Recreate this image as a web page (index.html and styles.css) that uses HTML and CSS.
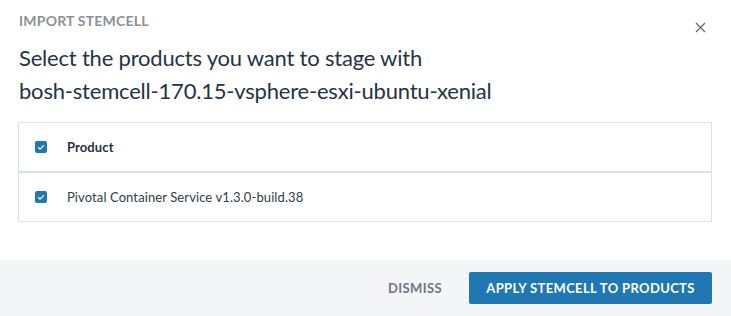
FILE: index.html
```html
<!DOCTYPE html>
<html>
<head>
<meta charset="utf-8">
<link rel="stylesheet" href="styles.css">
</head>
<body>
<div class="modal">
  <div class="body">
    <div class="top">
      <div class="eyebrow">IMPORT STEMCELL</div>
      <button class="close" aria-label="Close">
        <svg width="11" height="11" viewBox="0 0 11 11"><path d="M1 1L10 10M10 1L1 10" stroke="#5f6b76" stroke-width="1.3" fill="none"/></svg>
      </button>
    </div>
    <h1 class="title">Select the products you want to stage with<br>bosh-stemcell-170.15-vsphere-esxi-ubuntu-xenial</h1>
    <div class="table">
      <div class="row head">
        <span class="cb"><svg width="12" height="12" viewBox="0 0 12 12"><path d="M3 6.2L5 8.2L9 4.2" stroke="#fff" stroke-width="1.2" fill="none"/></svg></span>
        <span class="label">Product</span>
      </div>
      <div class="row">
        <span class="cb"><svg width="12" height="12" viewBox="0 0 12 12"><path d="M3 6.2L5 8.2L9 4.2" stroke="#fff" stroke-width="1.2" fill="none"/></svg></span>
        <span class="label">Pivotal Container Service v1.3.0-build.38</span>
      </div>
    </div>
  </div>
  <div class="footer">
    <button class="dismiss">DISMISS</button>
    <button class="apply">APPLY STEMCELL TO PRODUCTS</button>
  </div>
</div>
</body>
</html>
```
FILE: styles.css
```css
html, body {
  margin: 0;
  padding: 0;
  background: #fff;
  font-family: Lato, "Open Sans", sans-serif;
}
.modal {
  width: 731px;
  height: 316px;
  display: flex;
  flex-direction: column;
}
.body {
  padding: 0 19px 0 18px;
  height: 260px;
  box-sizing: border-box;
}
.top {
  display: flex;
  justify-content: space-between;
  align-items: flex-start;
  padding-top: 13px;
}
.eyebrow {
  font-size: 14px;
  font-weight: 700;
  color: #8c9196;
  line-height: 16px;
  padding-left: 1px;
  letter-spacing: 0.2px;
}
.close {
  background: none;
  border: 0;
  padding: 0;
  margin: 9px 6px 0 0;
  width: 11px;
  height: 11px;
  display: flex;
}
.title {
  margin: 8px 0 0 1px;
  font-size: 22px;
  letter-spacing: -0.2px;
  font-weight: 400;
  line-height: 33px;
  color: #243444;
}
.table {
  margin-top: 15px;
  border: 1px solid #dde2e5;
}
.row {
  height: 48px;
  display: flex;
  align-items: center;
  padding-left: 16px;
  font-size: 13px;
  letter-spacing: 0.1px;
  color: #2f3d4a;
}
.row.head {
  border-bottom: 2px solid #dde2e5;
  font-weight: 700;
  color: #26323d;
}
.cb {
  width: 12px;
  height: 12px;
  background: #1f77b4;
  border-radius: 2px;
  display: flex;
  margin-right: 20px;
}
.footer {
  height: 56px;
  background: #f4f5f7;
  display: flex;
  justify-content: flex-end;
  align-items: center;
  padding-right: 19px;
  gap: 27px;
}
.dismiss {
  background: none;
  border: 0;
  font-family: inherit;
  font-size: 13px;
  font-weight: 700;
  letter-spacing: 0.4px;
  color: #6d7881;
  padding: 0;
}
.apply {
  background: #1f77b4;
  border: 0;
  border-radius: 2px;
  color: #fff;
  font-family: inherit;
  font-size: 13px;
  font-weight: 700;
  letter-spacing: 0.35px;
  height: 32px;
  width: 243px;
  padding: 0;
}
```
